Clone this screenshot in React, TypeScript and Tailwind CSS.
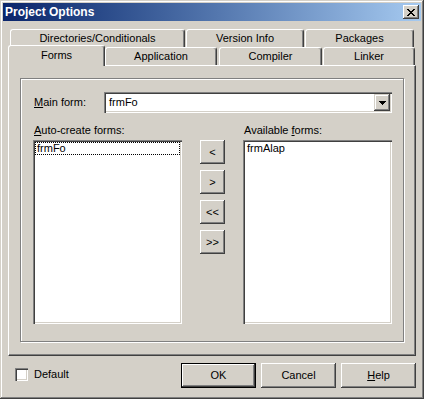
import React from "react";

function CloseGlyph() {
  const rows = [
    "XX....XX",
    ".XX..XX.",
    "..XXXX..",
    "...XX...",
    "..XXXX..",
    ".XX..XX.",
    "XX....XX",
  ];
  return (
    <svg width="8" height="7" viewBox="0 0 8 7" shapeRendering="crispEdges">
      {rows.flatMap((r, y) =>
        r.split("").map((c, x) =>
          c === "X" ? <rect key={`${x}-${y}`} x={x} y={y} width="1" height="1" fill="#000" /> : null
        )
      )}
    </svg>
  );
}

export default function App() {
  return (
    <div className="w-[424px] h-[399px] bg-[#D4D0C8] p-[3px] flex flex-col shadow-[inset_-1px_-1px_#404040,inset_1px_1px_#D4D0C8,inset_-2px_-2px_#808080,inset_2px_2px_#fff] font-['Liberation_Sans',Arial,sans-serif] text-[11px] leading-none text-black select-none">
      {/* Title bar */}
      <div className="h-[18px] flex items-center justify-between bg-gradient-to-r from-[#0A246A] to-[#A6CAF0] pl-[2px] pr-[2px]">
        <span className="text-white font-bold text-[12px] leading-none">Project Options</span>
        <div className="w-[16px] h-[14px] bg-[#D4D0C8] flex items-center justify-center shadow-[inset_-1px_-1px_#404040,inset_1px_1px_#fff,inset_-2px_-2px_#808080,inset_2px_2px_#D4D0C8]">
          <CloseGlyph />
        </div>
      </div>

      {/* Tabs */}
      <div className="mt-[8px] ml-[5px] w-[408px] flex flex-col">
        <div className="h-[18px] flex pl-[2px]">
          <div className="w-[175px] h-[18px] bg-[#D4D0C8] border-t border-l border-white border-r border-r-[#404040] shadow-[inset_-1px_0_#808080] rounded-t-[3px] flex items-center justify-center">
            Directories/Conditionals
          </div>
          <div className="ml-[1px] w-[118px] h-[18px] bg-[#D4D0C8] border-t border-l border-white border-r border-r-[#404040] shadow-[inset_-1px_0_#808080] rounded-t-[3px] flex items-center justify-center">
            Version Info
          </div>
          <div className="ml-[1px] w-[109px] h-[18px] bg-[#D4D0C8] border-t border-l border-white border-r border-r-[#404040] shadow-[inset_-1px_0_#808080] rounded-t-[3px] flex items-center justify-center">
            Packages
          </div>
        </div>
        <div className="h-[18px] flex items-end">
          <div className="relative z-10 w-[97px] h-[21px] mb-[-1px] bg-[#D4D0C8] border-t border-l border-white border-r border-r-[#404040] shadow-[inset_-1px_0_#808080] rounded-t-[3px] flex justify-center pt-[4px]">
            Forms
          </div>
          <div className="w-[112px] h-[18px] bg-[#D4D0C8] border-t border-l border-white border-r border-r-[#404040] shadow-[inset_-1px_0_#808080] rounded-t-[3px] flex items-center justify-center">
            Application
          </div>
          <div className="ml-[2px] w-[103px] h-[18px] bg-[#D4D0C8] border-t border-l border-white border-r border-r-[#404040] shadow-[inset_-1px_0_#808080] rounded-t-[3px] flex items-center justify-center">
            Compiler
          </div>
          <div className="ml-[1px] w-[92px] h-[18px] bg-[#D4D0C8] border-t border-l border-white border-r border-r-[#404040] shadow-[inset_-1px_0_#808080] rounded-t-[3px] flex items-center justify-center">
            Linker
          </div>
        </div>

        {/* Page */}
        <div className="h-[291px] border-t border-l border-white border-r border-b border-r-[#404040] border-b-[#404040] shadow-[inset_-1px_-1px_#808080] pl-[11px] pt-[12px]">
          <div className="w-[384px] h-[264px] border border-[#808080] shadow-[inset_1px_1px_#fff,1px_1px_#fff] pl-[12px] pt-[13px]">
            {/* Main form row */}
            <div className="flex items-center h-[21px]">
              <div className="w-[71px] pl-[1px]">
                <span className="underline underline-offset-[1px]">M</span>ain form:
              </div>
              <div className="w-[288px] h-[21px] bg-white flex items-center shadow-[inset_1px_1px_#808080,inset_2px_2px_#404040,inset_-1px_-1px_#fff,inset_-2px_-2px_#D4D0C8] p-[2px]">
                <div className="flex-1 pl-[3px]">frmFo</div>
                <div className="w-[16px] h-[17px] bg-[#D4D0C8] flex items-center justify-center shadow-[inset_-1px_-1px_#404040,inset_1px_1px_#D4D0C8,inset_-2px_-2px_#808080,inset_2px_2px_#fff]">
                  <svg width="7" height="4" viewBox="0 0 7 4" shapeRendering="crispEdges">
                    <rect x="0" y="0" width="7" height="1" fill="#000" />
                    <rect x="1" y="1" width="5" height="1" fill="#000" />
                    <rect x="2" y="2" width="3" height="1" fill="#000" />
                    <rect x="3" y="3" width="1" height="1" fill="#000" />
                  </svg>
                </div>
              </div>
            </div>

            {/* Lists row */}
            <div className="mt-[12px] flex">
              <div className="w-[149px] flex flex-col">
                <div className="h-[11px] pl-[1px]">
                  <span className="underline underline-offset-[1px]">A</span>uto-create forms:
                </div>
                <div className="mt-[4px] h-[184px] bg-white shadow-[inset_1px_1px_#808080,inset_2px_2px_#404040,inset_-1px_-1px_#fff,inset_-2px_-2px_#D4D0C8] p-[2px]">
                  <div className="h-[13px] border border-dotted border-black flex items-center pl-[1px]">frmFo</div>
                </div>
              </div>

              <div className="ml-[18px] pt-[15px] flex flex-col gap-[6px]">
                {["<", ">", "<<", ">>"].map((t) => (
                  <div
                    key={t}
                    className="w-[25px] h-[24px] bg-[#D4D0C8] flex items-center justify-center shadow-[inset_-1px_-1px_#404040,inset_1px_1px_#fff,inset_-2px_-2px_#808080,inset_2px_2px_#D4D0C8]"
                  >
                    {t}
                  </div>
                ))}
              </div>

              <div className="ml-[18px] w-[149px] flex flex-col">
                <div className="h-[11px] pl-[1px]">
                  Available <span className="underline underline-offset-[1px]">f</span>orms:
                </div>
                <div className="mt-[4px] h-[184px] bg-white shadow-[inset_1px_1px_#808080,inset_2px_2px_#404040,inset_-1px_-1px_#fff,inset_-2px_-2px_#D4D0C8] p-[2px]">
                  <div className="h-[13px] flex items-center pl-[2px]">frmAlap</div>
                </div>
              </div>
            </div>
          </div>
        </div>
      </div>

      {/* Bottom bar */}
      <div className="flex items-start pl-[12px] pr-[5px]">
        <div className="mt-[12px] flex items-center">
          <div className="w-[13px] h-[13px] bg-white shadow-[inset_1px_1px_#808080,inset_2px_2px_#404040,inset_-1px_-1px_#fff,inset_-2px_-2px_#D4D0C8]" />
          <span className="ml-[6px]">Default</span>
        </div>
        <div className="ml-auto mt-[7px] flex gap-[5px]">
          <div className="w-[75px] h-[25px] border border-black">
            <div className="w-full h-full flex items-center justify-center shadow-[inset_-1px_-1px_#404040,inset_1px_1px_#fff,inset_-2px_-2px_#808080,inset_2px_2px_#D4D0C8]">
              OK
            </div>
          </div>
          <div className="w-[75px] h-[25px] flex items-center justify-center shadow-[inset_-1px_-1px_#404040,inset_1px_1px_#fff,inset_-2px_-2px_#808080,inset_2px_2px_#D4D0C8]">
            Cancel
          </div>
          <div className="w-[75px] h-[25px] flex items-center justify-center shadow-[inset_-1px_-1px_#404040,inset_1px_1px_#fff,inset_-2px_-2px_#808080,inset_2px_2px_#D4D0C8]">
            <span>
              <span className="underline underline-offset-[1px]">H</span>elp
            </span>
          </div>
        </div>
      </div>
    </div>
  );
}
